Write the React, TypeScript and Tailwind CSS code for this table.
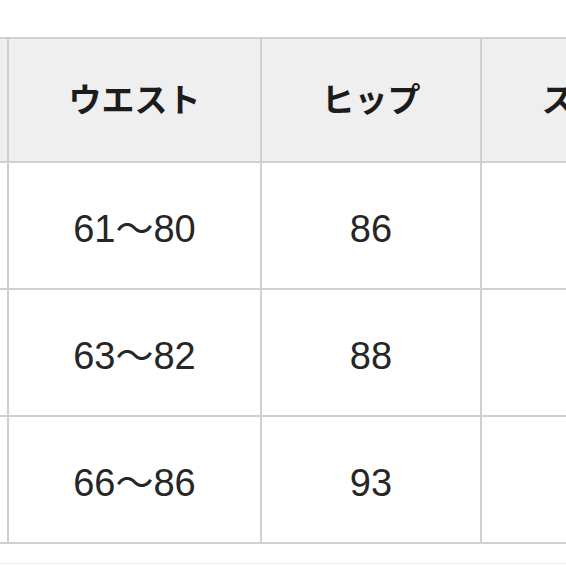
const rows = [
  ["61～80", "86"],
  ["63～82", "88"],
  ["66～86", "93"],
];

export default function App() {
  const font = { fontFamily: '"Liberation Sans", "Noto Sans CJK JP", sans-serif' };
  return (
    <div className="w-[566px] h-[566px] bg-white overflow-hidden" style={font}>
      <div className="pt-[37px]">
        <div className="grid grid-cols-[7px_251px_218px_284px] gap-[2px] bg-[#d0d0d0] py-[2px] w-max">
          {/* header */}
          <div className="bg-[#efefef] h-[122px]"></div>
          <div className="bg-[#efefef] h-[122px] flex items-center justify-center text-[33px] font-bold text-[#1c1c1c] pt-[2px]">
            ウエスト
          </div>
          <div className="bg-[#efefef] h-[122px] flex items-center justify-center text-[33px] font-bold text-[#1c1c1c] pt-[2px]">
            ヒップ
          </div>
          <div className="bg-[#efefef] h-[122px] flex items-center justify-center text-[33px] font-bold text-[#1c1c1c] pt-[2px]">
            スカート丈
          </div>

          {rows.map(([waist, hip], i) => (
            <div key={i} className="contents">
              <div className="bg-white h-[125px]"></div>
              <div className="bg-white h-[125px] flex items-center justify-center text-[38px] text-[#262626] pt-[7px]">
                {waist}
              </div>
              <div className="bg-white h-[125px] flex items-center justify-center text-[38px] text-[#262626] pt-[7px]">
                {hip}
              </div>
              <div className="bg-white h-[125px]"></div>
            </div>
          ))}
        </div>
        <div className="mt-[19px] border-t border-[#ececec]"></div>
      </div>
    </div>
  );
}
